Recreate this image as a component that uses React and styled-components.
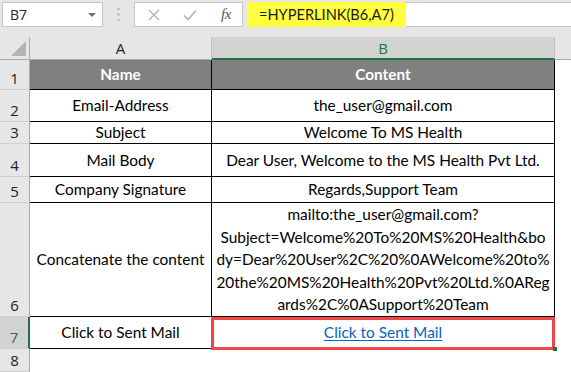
import React from 'react';
import styled, { createGlobalStyle } from 'styled-components';

const Global = createGlobalStyle`
  html, body { margin: 0; padding: 0; background: #fff; }
  body { width: 571px; height: 372px; overflow: hidden; }
  * { box-sizing: border-box; }
`;

const CELL_FONT = `Lato, "Liberation Sans", sans-serif`;
const UI_FONT = `"Open Sans", "Noto Sans", sans-serif`;

const Window = styled.div`
  width: 571px;
  height: 372px;
  overflow: hidden;
  background: #fff;
  display: flex;
  flex-direction: column;
`;

const Toolbar = styled.div`
  height: 37px;
  padding: 2px 0 10px 2px;
  background: #e6e6e6;
  display: flex;
  align-items: stretch;
`;

const NameBox = styled.div`
  width: 101px;
  background: #fff;
  border: 1px solid #c6c6c6;
  display: flex;
  align-items: center;
  justify-content: space-between;
  padding: 0 6px 0 7px;
  font-family: ${UI_FONT};
  font-size: 14px;
  color: #262626;
`;

const Caret = styled.span`
  width: 0;
  height: 0;
  border-left: 4px solid transparent;
  border-right: 4px solid transparent;
  border-top: 4px solid #707070;
`;

const Grip = styled.div`
  width: 31px;
  display: flex;
  align-items: center;
  justify-content: center;
`;

const FxBox = styled.div`
  width: 109px;
  background: #fff;
  border: 1px solid #c6c6c6;
  display: flex;
  align-items: center;
  padding-left: 12px;
  gap: 22px;
`;

const IconSlot = styled.span`
  width: 14px;
  display: flex;
  align-items: center;
  justify-content: center;
`;

const Fx = styled.span`
  font-family: "Liberation Serif", serif;
  font-style: italic;
  font-size: 15px;
  color: #555;
  letter-spacing: -0.5px;
`;

const FormulaInput = styled.div`
  flex: 1;
  margin-left: 4px;
  background: #fff;
  border: 1px solid #c6c6c6;
  border-right: none;
  display: flex;
`;

const Highlight = styled.div`
  width: 159px;
  margin: -1px 0 -1px -1px;
  background: #ffff3f;
  display: flex;
  align-items: center;
  padding-left: 12px;
  font-family: ${CELL_FONT};
  font-size: 14.6px;
  color: #1a1a1a;
`;

const Sheet = styled.div`
  flex: 1;
  display: grid;
  grid-template-columns: 30px 182px 343px 1fr;
  grid-template-rows: 23px 30px 32px 22px 33px 26px 114px 32px 1fr;
`;

const Corner = styled.div`
  background: #e6e6e6;
  border-right: 1px solid #ababab;
  border-bottom: 1px solid #ababab;
  display: flex;
  align-items: flex-end;
  justify-content: flex-end;
  padding: 0 3px 3px 0;
`;

const ColHeader = styled.div`
  background: ${(p) => (p.$selected ? '#d2d2d2' : '#e6e6e6')};
  border-right: 1px solid #c0c0c0;
  border-bottom: ${(p) => (p.$selected ? '2px solid #217346' : '1px solid #ababab')};
  color: ${(p) => (p.$selected ? '#217346' : '#222')};
  display: flex;
  align-items: center;
  justify-content: center;
  font-family: ${UI_FONT};
  font-size: 15px;
`;

const HeaderFiller = styled.div`
  background: #e6e6e6;
  border-bottom: 1px solid #ababab;
`;

const RowHeader = styled.div`
  background: ${(p) => (p.$selected ? '#d2d2d2' : '#e6e6e6')};
  border-right: ${(p) => (p.$selected ? '2px solid #217346' : '1px solid #ababab')};
  border-bottom: 1px solid #cfcfcf;
  color: ${(p) => (p.$selected ? '#217346' : '#222')};
  display: flex;
  align-items: flex-end;
  justify-content: center;
  padding-bottom: 1px;
  font-family: ${UI_FONT};
  font-size: 15px;
  line-height: 20px;
`;

const Cell = styled.div`
  position: relative;
  background: ${(p) => (p.$head ? '#808080' : '#fff')};
  color: ${(p) => (p.$head ? '#fff' : '#000')};
  font-weight: ${(p) => (p.$head ? 700 : 400)};
  border-right: 1px solid #000;
  border-bottom: 1px solid #000;
  display: flex;
  flex-direction: column;
  align-items: center;
  justify-content: center;
  text-align: center;
  white-space: nowrap;
  font-family: ${CELL_FONT};
  font-size: 15.4px;
  line-height: 22.6px;
`;

const Blank = styled.div`
  background: #fff;
`;

const Link = styled.a`
  color: #0563c1;
  text-decoration: underline;
  text-underline-offset: 2px;
`;

const Mark = styled.div`
  position: absolute;
  top: 0;
  left: -1px;
  right: -1px;
  bottom: -2px;
  border: 3px solid #f24646;
  pointer-events: none;
`;

const Handle = styled.div`
  position: absolute;
  right: -3px;
  bottom: -3px;
  width: 4px;
  height: 4px;
  background: #217346;
`;

const rows = [
  { n: 1, a: 'Name', b: 'Content', head: true },
  { n: 2, a: 'Email-Address', b: 'the_user@gmail.com' },
  { n: 3, a: 'Subject', b: 'Welcome To MS Health' },
  { n: 4, a: 'Mail Body', b: 'Dear User, Welcome to the MS Health Pvt Ltd.' },
  { n: 5, a: 'Company Signature', b: 'Regards,Support Team' },
  {
    n: 6,
    a: 'Concatenate the content',
    b: [
      'mailto:the_user@gmail.com?',
      'Subject=Welcome%20To%20MS%20Health&bo',
      'dy=Dear%20User%2C%20%0AWelcome%20to%',
      '20the%20MS%20Health%20Pvt%20Ltd.%0AReg',
      'ards%2C%0ASupport%20Team',
    ],
  },
];

export default function App() {
  return (
    <Window>
      <Global />
      <Toolbar>
        <NameBox>
          <span>B7</span>
          <Caret />
        </NameBox>
        <Grip>
          <svg width="3" height="13" viewBox="0 0 3 13">
            <rect x="0.5" y="0" width="2" height="2" fill="#b0b0b0" />
            <rect x="0.5" y="5.5" width="2" height="2" fill="#b0b0b0" />
            <rect x="0.5" y="11" width="2" height="2" fill="#b0b0b0" />
          </svg>
        </Grip>
        <FxBox>
          <IconSlot>
            <svg width="12" height="12" viewBox="0 0 12 12">
              <path d="M1 1 L11 11 M11 1 L1 11" stroke="#b3b3b3" strokeWidth="1.4" fill="none" />
            </svg>
          </IconSlot>
          <IconSlot>
            <svg width="14" height="12" viewBox="0 0 14 12">
              <path d="M1 6.5 L5 10.5 L13 1.5" stroke="#b3b3b3" strokeWidth="1.6" fill="none" />
            </svg>
          </IconSlot>
          <IconSlot>
            <Fx>fx</Fx>
          </IconSlot>
        </FxBox>
        <FormulaInput>
          <Highlight>=HYPERLINK(B6,A7)</Highlight>
        </FormulaInput>
      </Toolbar>
      <Sheet>
        <Corner>
          <svg width="15" height="15" viewBox="0 0 15 15">
            <polygon points="15,0 15,15 0,15" fill="#b4b4b4" />
          </svg>
        </Corner>
        <ColHeader>A</ColHeader>
        <ColHeader $selected>B</ColHeader>
        <HeaderFiller />

        {rows.map((r) => (
          <React.Fragment key={r.n}>
            <RowHeader>{r.n}</RowHeader>
            <Cell $head={r.head}>{r.a}</Cell>
            <Cell $head={r.head}>
              {Array.isArray(r.b) ? r.b.map((l) => <span key={l}>{l}</span>) : r.b}
            </Cell>
            <Blank />
          </React.Fragment>
        ))}

        <RowHeader $selected>7</RowHeader>
        <Cell>Click to Sent Mail</Cell>
        <Cell>
          <Link href="#">Click to Sent Mail</Link>
          <Mark />
          <Handle />
        </Cell>
        <Blank />

        <RowHeader>8</RowHeader>
        <Blank />
        <Blank />
        <Blank />
      </Sheet>
    </Window>
  );
}
